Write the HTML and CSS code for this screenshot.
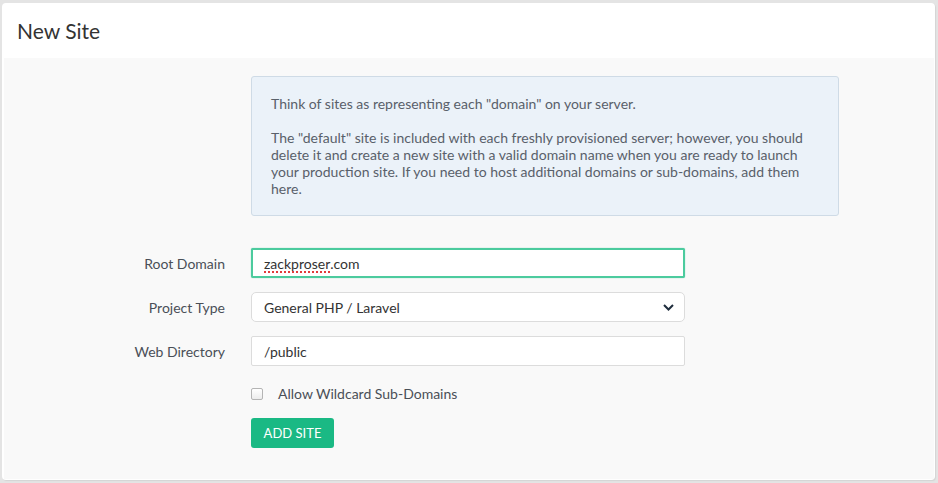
FILE: index.html
```html
<!DOCTYPE html>
<html>
<head>
<meta charset="utf-8">
<link rel="stylesheet" href="styles.css">
</head>
<body>
<div class="card">
  <div class="card-header">New Site</div>
  <div class="card-body">
    <div class="row">
      <div class="label"></div>
      <div class="info">
        <p>Think of sites as representing each "domain" on your server.</p>
        <p>The "default" site is included with each freshly provisioned server; however, you should delete it and create a new site with a valid domain name when you are ready to launch your production site. If you need to host additional domains or sub-domains, add them here.</p>
      </div>
    </div>
    <div class="row field first">
      <label class="label">Root Domain</label>
      <div class="input focused"><span class="spell">zackproser</span>.com</div>
    </div>
    <div class="row field">
      <label class="label">Project Type</label>
      <div class="input select">General PHP / Laravel
        <svg class="chev" width="11" height="7" viewBox="0 0 11 7"><path d="M1 1l4.5 4.5L10 1" fill="none" stroke="#1f2d3d" stroke-width="2"/></svg>
      </div>
    </div>
    <div class="row field">
      <label class="label">Web Directory</label>
      <div class="input">/public</div>
    </div>
    <div class="row check">
      <div class="label"></div>
      <div class="checkline"><span class="box"></span><span>Allow Wildcard Sub-Domains</span></div>
    </div>
    <div class="row">
      <div class="label"></div>
      <button class="btn">ADD SITE</button>
    </div>
  </div>
</div>
</body>
</html>
```
FILE: styles.css
```css
html, body { margin: 0; padding: 0; }
body {
  background: #e4e4e4;
  font-family: Lato, "Open Sans", sans-serif;
  color: #4a4f57;
  width: 938px;
  height: 483px;
  overflow: hidden;
}
.card {
  margin: 3px 3px 0 2px;
  height: 477px;
  background: #fff;
  border-radius: 4px;
  box-shadow: 1px 1px 1px #d4d4d4;
  box-sizing: border-box;
  padding: 0 1px 1px 2px;
  display: flex;
  flex-direction: column;
}
.card-header {
  height: 55px;
  display: flex;
  align-items: center;
  padding-left: 13px;
  font-size: 21px;
  font-weight: 400;
  color: #333;
}
.card-body {
  flex: 1;
  background: #f9f9f9;
  padding-top: 18px;
}
.row { display: flex; }
.label {
  width: 221px;
  flex: none;
  text-align: right;
  padding-right: 26px;
  font-size: 14px;
  color: #4a4f57;
}
.info {
  width: 548px;
  background: #ebf2f9;
  border: 1px solid #cfdbe6;
  border-radius: 3px;
  padding: 18px 19px 18px 19px;
  font-size: 14px;
  line-height: 17px;
  color: #59606a;
}
.info p { margin: 0 0 17px 0; }
.info p:last-child { margin-bottom: 0; }
.field { align-items: center; margin-top: 14px; }
.field.first { margin-top: 32px; }
.input {
  width: 434px;
  height: 30px;
  box-sizing: border-box;
  border: 1px solid #dcdcdc;
  border-radius: 2px;
  background: #fff;
  padding: 0 12px;
  display: flex;
  align-items: center;
  font-size: 14px;
  color: #333;
}
.input.focused {
  border: 2px solid #4ccb9e;
  padding-left: 11px;
  box-shadow: 0 0 1px #4ccb9e;
}
.spell {
  text-decoration: underline dotted #e23b3b;
  text-decoration-thickness: 2px;
  text-underline-offset: 3px;
}
.input.select {
  border-radius: 5px;
  justify-content: space-between;
  padding-right: 10px;
}
.check { margin-top: 19px; align-items: center; }
.checkline { display: flex; align-items: center; font-size: 14px; color: #4a4f57; }
.box {
  width: 10px;
  height: 10px;
  border: 1px solid #b4b4b4;
  border-radius: 2px;
  background: linear-gradient(#fff, #ececec);
  margin-right: 15px;
}
.btn {
  margin-top: 16px;
  width: 83px;
  height: 30px;
  background: #1ab984;
  border: none;
  border-radius: 3px;
  color: #fff;
  font-family: Lato, "Open Sans", sans-serif;
  font-size: 13px;
  padding: 0;
}
```
